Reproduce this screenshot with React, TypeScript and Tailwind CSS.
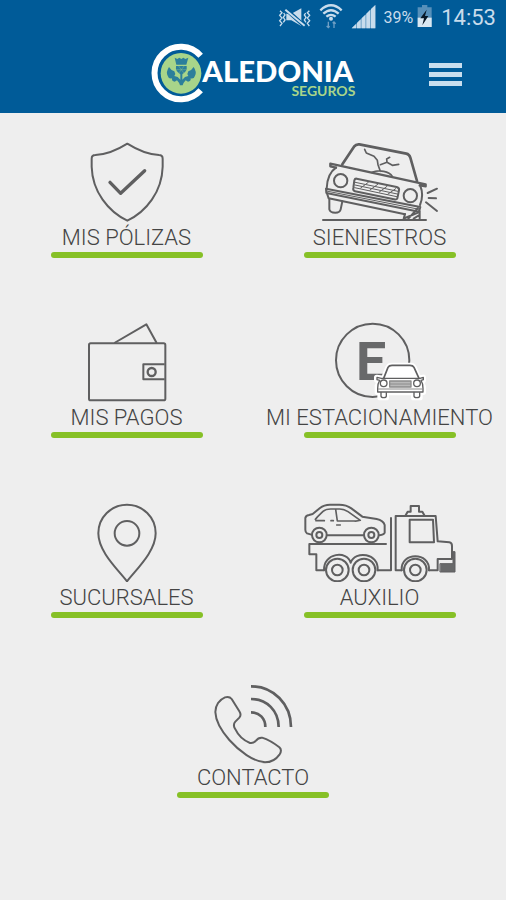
import type { ReactNode } from "react";

interface MenuItem {
    label: string;
    href: string;
    icon: ReactNode;
}

function IconoPoliza() {
    return (
        <svg viewBox="21 36 480 240" className="h-20 w-40" fill="none" stroke="#5f5f60" strokeWidth="6" strokeLinejoin="round" strokeLinecap="round">
            <path d="M262 41C235 58 198 74 166 75Q155 75 155 86V110C157 185 205 245 262 272C319 245 366 185 368 110V86Q368 75 357 75C328 74 289 58 262 41Z" />
            <path d="M210 157L242 190L314 122" strokeWidth="10" />
        </svg>
    );
}

function IconoSiniestro() {
    return (
        <svg viewBox="30 36 480 240" className="h-20 w-40" fill="none" stroke="#5f5f60" strokeWidth="6" strokeLinejoin="round" strokeLinecap="round">
            {/* techo y parabrisas */}
            <path d="M157 103L192 50Q198 42 208 43L349 71Q358 73 361 83L381 153" strokeWidth="8" />
            <path d="M224 58L229 69L252 79L262 91L264 104L271 124M271 104L291 97L290 87L299 82M291 97L307 106L326 103M246 127Q262 120 281 124Q300 128 307 139" strokeWidth="5" />
            {/* carroceria */}
            <path d="M121 101L407 163M121 101V109L138 113M407 163V169L389 166" strokeWidth="7" />
            <path d="M138 113C117 127 111 148 110 176M391 168C399 187 397 208 390 225" />
            <path d="M108 176L391 231L387 245L109 189Z" />
            <path d="M109 183L388 238" strokeWidth="3" />
            <path d="M111 190L116 205L345 253" />
            <path d="M200 146L320 171Q329 174 327 181L322 205Q320 210 312 208L195 184Q188 181 190 174L193 151Q195 145 200 146Z" />
            <path d="M196 157L324 184M195 165L322 192M194 173L320 200" strokeWidth="3" />
            <path d="M212 174L235 157M240 180L263 163M268 186L291 169M293 193L317 176" strokeWidth="3" />
            <circle cx="152" cy="152" r="20" fill="#eee" />
            <circle cx="361" cy="197" r="20" fill="#eee" />
            {/* ruedas */}
            <path d="M118 206V238Q120 248 136 248Q150 248 152 238L157 214" />
            <path d="M345 252L341 266M389 244V266M345 264L386 247M355 266L384 234M371 266L388 255" />
            <path d="M99 270H408" />
            <path d="M413 189L441 176M416 204L438 205M408 217L441 243" />
        </svg>
    );
}

function IconoPagos() {
    return (
        <svg viewBox="21 36 480 240" className="h-20 w-40" fill="none" stroke="#5f5f60" strokeWidth="6" strokeLinejoin="round">
            <rect x="147" y="100" width="229" height="171" rx="5" />
            <path d="M223 99L319 43L350 99" />
            <path d="M374 163H310V208H374" />
            <circle cx="335" cy="186" r="12" strokeWidth="7" />
        </svg>
    );
}

function IconoEstacionamiento() {
    return (
        <svg viewBox="120 36 480 240" className="h-20 w-40" fill="none" stroke="#5f5f60" strokeWidth="6" strokeLinejoin="round" strokeLinecap="round">
            <circle cx="338" cy="151" r="110" />
            <text x="288" y="210" fontSize="161" fontWeight="700" fontFamily="Roboto, sans-serif" fill="#68696a" stroke="none">E</text>
            {/* borde blanco del auto */}
            <path d="M371 205L384 172Q387 166 396 166H450Q459 166 462 172L477 205L490 202V212L484 218L490 230V247H480V263H461V248H379V263H360V247H352V228L358 216L350 210V202Z" fill="#fff" stroke="#fff" strokeWidth="16" />
            <path d="M371 205L384 172Q387 166 396 166H450Q459 166 462 172L477 205" strokeWidth="5" />
            <path d="M366 205H480M364 205L351 202V209L359 211M480 205L490 202V209L484 211M359 211Q353 220 353 235V246H489V235Q489 220 483 211" strokeWidth="4" />
            <path d="M363 247V258Q363 263 371 263Q379 263 379 258V248M462 247V258Q462 263 470 263Q479 263 479 258V248" strokeWidth="4" />
            <rect x="389" y="213" width="64" height="18" fill="#b9b9b9" stroke="#8c8c8c" strokeWidth="4" />
            <path d="M390 222H452M355 237H487" stroke="#8c8c8c" strokeWidth="3" />
            <circle cx="371" cy="220" r="10" fill="#fff" strokeWidth="4" />
            <circle cx="471" cy="220" r="10" fill="#fff" strokeWidth="4" />
        </svg>
    );
}

function IconoSucursal() {
    return (
        <svg viewBox="21 36 480 240" className="h-20 w-40" fill="none" stroke="#5f5f60" strokeWidth="6" strokeLinejoin="round">
            <path d="M261 274C231 236 175 184 175 130A86 86 0 0 1 347 130C347 184 291 236 261 274Z" />
            <circle cx="261" cy="130" r="37" />
        </svg>
    );
}

function IconoAuxilio() {
    return (
        <svg viewBox="30 36 480 240" className="h-20 w-40" fill="none" stroke="#5f5f60" strokeWidth="6" strokeLinejoin="round" strokeLinecap="round">
            {/* auto remolcado */}
            <path d="M64 134L51 130Q46 127 46 119V84Q47 77 57 75L68 72L90 54Q102 44 120 44H148Q169 44 184 55L217 80L260 87Q280 91 284 105V128Q283 134 268 136M112 136H220" />
            <path d="M76 88L83 80L99 64Q107 57 122 57H149Q163 57 174 65L211 91Q202 94 192 93H142L137 58M78 92H103M123 92H130M140 105H151" strokeWidth="5" />
            <circle cx="88" cy="135" r="22" />
            <circle cx="88" cy="135" r="9" />
            <circle cx="244" cy="135" r="22" />
            <circle cx="244" cy="135" r="9" />
            {/* plataforma */}
            <path d="M288 162H58V193H79V241H102M263 241H303V84" />
            <path d="M102 241C100 187 172 181 182 218C195 181 267 188 263 241" />
            <circle cx="142" cy="240" r="34" fill="#eee" />
            <circle cx="142" cy="240" r="16" />
            <circle cx="222" cy="240" r="34" fill="#eee" />
            <circle cx="222" cy="240" r="16" />
            {/* cabina */}
            <path d="M335 241H317V78H437L443 154L478 157Q486 158 486 168V207H443V241H417" />
            <path d="M335 241C331 185 421 185 417 241" />
            <path d="M347 76L353 65H362V48H387V65H397L403 76" />
            <path d="M359 89H429L432 157H359Z" />
            <circle cx="376" cy="240" r="34" fill="#eee" />
            <circle cx="376" cy="240" r="16" />
            <path d="M451 221H489V185H495V246H451Z" fill="#68696a" strokeWidth="3" />
        </svg>
    );
}

function IconoContacto() {
    return (
        <svg viewBox="9 36 480 240" className="h-20 w-40 overflow-visible" fill="none" stroke="#5f5f60" strokeWidth="6" strokeLinejoin="round">
            <path d="M185 87L208 124Q215 135 208 143L196 155Q188 164 195 176C204 195 222 212 240 219Q250 221 258 212Q265 202 276 203C289 207 314 221 328 232Q337 240 329 253C317 270 303 277 285 277C251 275 207 243 178 210C152 180 137 154 136 126C136 106 148 89 165 82Q178 78 185 87Z" />
            <path d="M243 49C310 49 363 102 363 171M243 87C290 87 326 122 326 171M243 127C268 127 286 145 286 171" strokeWidth="8" />
        </svg>
    );
}

function Logo() {
    return (
        <svg viewBox="30 24 618 180" className="h-15 w-[206px] overflow-visible" role="img" aria-label="Caledonia Seguros">
            <path d="M182 59A79 79 0 1 0 182 163" fill="none" stroke="#fff" strokeWidth="18" />
            <circle cx="123" cy="112" r="61" fill="#a8d58a" />
            {/* cardo */}
            <g fill="#2c7f9b">
                <path d="M104 65L112 69L118 65L124 69L130 65L136 69L145 65L139 86H109Z" />
                <path d="M108 90H140Q143 108 124 116Q105 108 108 90Z" />
                <path d="M121 114H127V131Q134 121 145 120Q140 113 145 106Q155 103 161 93Q171 108 165 119Q162 130 152 127Q153 137 144 137L137 133Q131 139 128 148H120Q117 139 111 133L104 137Q95 137 96 127Q86 130 83 119Q77 108 87 93Q93 103 103 106Q108 113 103 120Q114 121 121 131Z" />
            </g>
            <path d="M109 101H139M115 89L133 113M133 89L115 113" stroke="#a8d58a" strokeWidth="1" />
            <text x="187" y="138" fontSize="88" fontWeight="900" fontFamily="Lato, sans-serif" fill="#fff">ALEDONIA</text>
            <text x="646" y="179" textAnchor="end" fontSize="42" fontWeight="700" fontFamily="Lato, sans-serif" fill="#a8d58a">SEGUROS</text>
        </svg>
    );
}

function BarraEstado() {
    return (
        <div className="flex h-9 items-center justify-end gap-2 pr-[10px] text-[#c8dcec]">
            <svg viewBox="54 0 99 108" className="h-9 w-[33px]" fill="none" stroke="currentColor" strokeWidth="5">
                <path d="M79 41H94L124 25V78L94 61H79Z" fill="currentColor" stroke="none" />
                <path d="M74 25L134 79" stroke="#005b98" strokeWidth="12" />
                <path d="M76 29L134 77" strokeWidth="6" />
                <path d="M60 32L66 38L59 46L66 54L59 62L66 70L60 78M71 39L75 45L70 52L75 60L70 67M148 32L142 38L149 46L142 54L149 62L142 70L148 78M137 39L133 45L138 52L133 60L138 67" strokeWidth="4" />
            </svg>
            <svg viewBox="174 0 72 108" className="h-9 w-6" fill="none" stroke="currentColor" strokeWidth="7">
                <path d="M178 31Q210 1 242 31M187 41Q210 20 233 41M196 50Q210 39 224 50" />
                <circle cx="210" cy="56" r="6" fill="currentColor" stroke="none" />
                <path d="M202 65V83M197 78L202 83L206 79M219 84V66M215 70L219 66L224 71" stroke="#6f9fc4" strokeWidth="4" />
            </svg>
            <svg viewBox="270 0 75 108" className="h-9 w-[25px]" fill="currentColor">
                <path d="M272 85L285 72V85ZM288 69L299 58V85H288ZM302 55L313 44V85H302ZM316 41L327 30V85H316ZM330 27L343 15V85H330Z" />
                <path d="M272 85L343 15V85Z" opacity="0.55" />
            </svg>
            <span className="font-[Roboto,sans-serif] text-base leading-5">39%</span>
            <svg viewBox="471 0 48 108" className="-ml-1 h-9 w-4">
                <path d="M486 15H502V22H515V81H473V22H486Z" fill="#5790ba" />
                <path d="M473 53H515V81H473Z" fill="#d9e8f2" />
                <path d="M500 29L481 55H492L487 76L505 48H495Z" fill="#071726" />
            </svg>
            <span className="font-[Roboto,sans-serif] text-[22px] leading-6">14:53</span>
        </div>
    );
}

const opciones: MenuItem[] = [
    { label: "MIS PÓLIZAS", href: "#polizas", icon: <IconoPoliza /> },
    { label: "SIENIESTROS", href: "#siniestros", icon: <IconoSiniestro /> },
    { label: "MIS PAGOS", href: "#pagos", icon: <IconoPagos /> },
    { label: "MI ESTACIONAMIENTO", href: "#estacionamiento", icon: <IconoEstacionamiento /> },
    { label: "SUCURSALES", href: "#sucursales", icon: <IconoSucursal /> },
    { label: "AUXILIO", href: "#auxilio", icon: <IconoAuxilio /> },
    { label: "CONTACTO", href: "#contacto", icon: <IconoContacto /> },
];

export default function App() {
    return (
        <div className="min-h-screen bg-[#eeeeee] font-[Roboto,sans-serif]">
            {/* Header */}
            <header className="bg-[#005b98] pb-px">
                <BarraEstado />
                <div className="grid h-[76px] grid-cols-[1fr_auto_1fr] items-center">
                    <div />
                    <Logo />
                    <button
                        type="button"
                        aria-label="Abrir menú"
                        className="mr-11 flex w-[33px] flex-col gap-1 justify-self-end"
                    >
                        <span className="h-[5px] w-full bg-[#c9deee]" />
                        <span className="h-[5px] w-full bg-[#c9deee]" />
                        <span className="h-[5px] w-full bg-[#c9deee]" />
                    </button>
                </div>
            </header>

            {/* Opciones */}
            <nav className="grid grid-cols-2 gap-y-16 pt-[29px] pb-10">
                {opciones.map((item) => (
                    <a
                        key={item.href}
                        href={item.href}
                        className="flex flex-col items-center last:odd:col-span-2"
                    >
                        {item.icon}
                        <span className="pt-[2px] text-[22px] leading-7 font-light whitespace-nowrap text-[#444444]">
                            {item.label}
                        </span>
                        <span className="h-[6px] w-[152px] rounded-full bg-[#86c026]" />
                    </a>
                ))}
            </nav>
        </div>
    );
}
